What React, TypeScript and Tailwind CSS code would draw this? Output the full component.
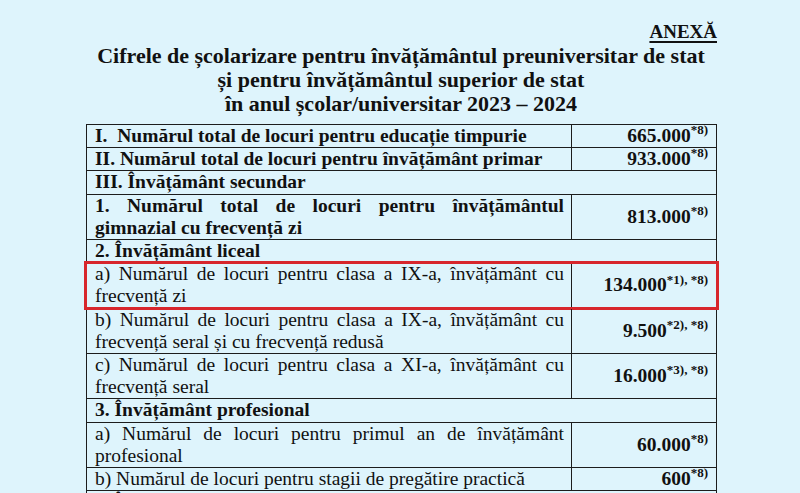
import React from "react";

type Row = {
  lines: string[];
  bold?: boolean;
  full?: boolean;
  num?: string;
  sup?: string;
  mark?: boolean;
};

const rows: Row[] = [
  { lines: ["I.\u00a0 Numărul total de locuri pentru educație timpurie"], bold: true, num: "665.000", sup: "*8)" },
  { lines: ["II. Numărul total de locuri pentru învățământ primar"], bold: true, num: "933.000", sup: "*8)" },
  { lines: ["III. Învățământ secundar"], bold: true, full: true },
  { lines: ["1. Numărul total de locuri pentru învățământul", "gimnazial cu frecvență zi"], bold: true, num: "813.000", sup: "*8)" },
  { lines: ["2. Învățământ liceal"], bold: true, full: true },
  { lines: ["a) Numărul de locuri pentru clasa a IX-a, învățământ cu", "frecvență zi"], num: "134.000", sup: "*1), *8)", mark: true },
  { lines: ["b) Numărul de locuri pentru clasa a IX-a, învățământ cu", "frecvență seral și cu frecvență redusă"], num: "9.500", sup: "*2), *8)" },
  { lines: ["c) Numărul de locuri pentru clasa a XI-a, învățământ cu", "frecvență seral"], num: "16.000", sup: "*3), *8)" },
  { lines: ["3. Învățământ profesional"], bold: true, full: true },
  { lines: ["a) Numărul de locuri pentru primul an de învățământ", "profesional"], num: "60.000", sup: "*8)" },
  { lines: ["b) Numărul de locuri pentru stagii de pregătire practică"], num: "600", sup: "*8)" },
  { lines: ["4. Învățământ postliceal"], bold: true, full: true },
];

function LeftText({ row }: { row: Row }) {
  return (
    <div className={`pl-2 pr-[7px] ${row.bold ? "font-bold" : ""}`}>
      {row.lines.map((l, i) =>
        row.lines.length > 1 && i === 0 ? (
          <div key={i} className="text-justify [text-align-last:justify]">
            {l}
          </div>
        ) : (
          <div key={i} className="whitespace-pre">
            {l}
          </div>
        )
      )}
    </div>
  );
}

function TableRow({ row }: { row: Row }) {
  if (row.full) {
    return (
      <div className="border-b border-[#1c1c1c]">
        <LeftText row={row} />
      </div>
    );
  }
  return (
    <div className="relative flex border-b border-[#1c1c1c]">
      <div className="w-[485px] shrink-0 border-r border-[#1c1c1c]">
        <LeftText row={row} />
      </div>
      <div className="flex flex-1 items-center justify-end pr-2 font-bold">
        <span>
          {row.num}
          <sup className="text-[13px] top-[-0.6em]">{row.sup}</sup>
        </span>
      </div>
      {row.mark && (
        <div className="absolute -left-[3px] -right-[3px] -top-[2px] -bottom-[2px] border-[3px] border-[#d7262c]" />
      )}
    </div>
  );
}

export default function App() {
  return (
    <div
      className="w-[800px] h-[493px] overflow-hidden bg-[#def4fc] text-[#111]"
      style={{ fontFamily: '"Liberation Serif", "Times New Roman", serif' }}
    >
      <div className="pt-[20px] pr-[83px] text-right text-[19px] leading-[24px] font-bold">
        <span className="underline decoration-[2px] underline-offset-[3px]">ANEXĂ</span>
      </div>
      <div className="text-center text-[22px] leading-[24px] font-bold pl-[2px]">
        <div>Cifrele de școlarizare pentru învățământul preuniversitar de stat</div>
        <div>și pentru învățământul superior de stat</div>
        <div>în anul școlar/universitar 2023 – 2024</div>
      </div>
      <div className="ml-[86px] mt-[8px] w-[631px] border-x border-t border-[#1c1c1c] text-[19.5px] leading-[22.2px]">
        {rows.map((r, i) => (
          <TableRow key={i} row={r} />
        ))}
      </div>
    </div>
  );
}
